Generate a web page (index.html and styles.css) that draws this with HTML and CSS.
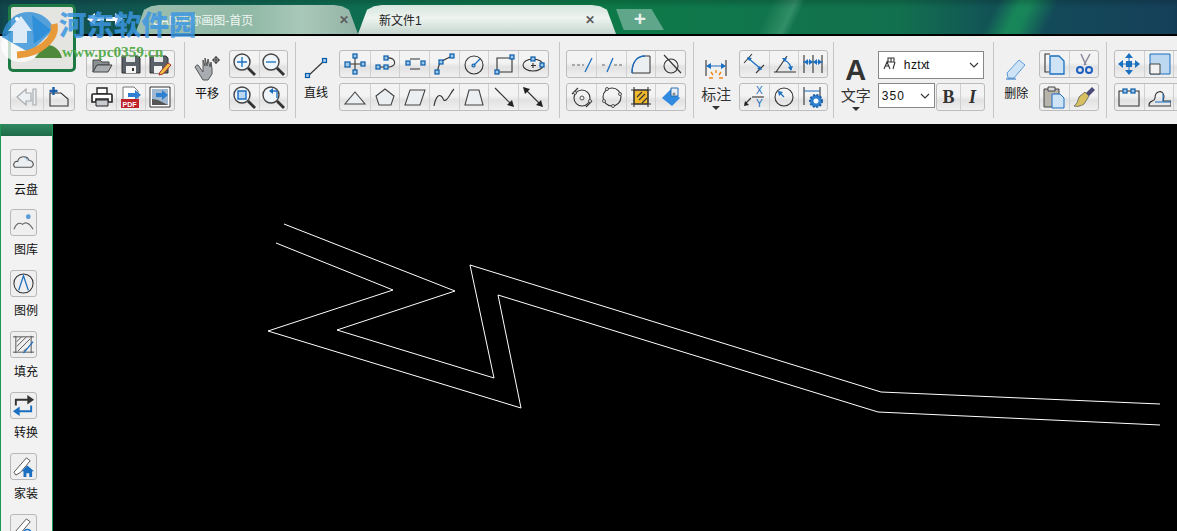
FILE: index.html
```html
<!DOCTYPE html>
<html lang="zh-CN">
<head>
    <meta charset="UTF-8">
    <title>CAD迷你画图</title>
    <link rel="stylesheet" href="styles.css">
</head>
<body>
    <!-- 标签栏 -->
    <header class="titlebar">
        <div class="nav-arrows">
            <svg width="40" height="18" viewBox="0 0 40 18"><path class="w" d="M2 9l8-6v4h9v4h-9v4z"/><path class="w" d="M38 9l-8-6v4h-9v4h9v4z"/></svg>
        </div>
        <div class="tab tab-home"><span>CAD迷你画图-首页</span><b class="close">✕</b></div>
        <div class="tab tab-active"><span>新文件1</span><b class="close">✕</b></div>
        <div class="tab-add">+</div>
    </header>

    <a class="logo">
        <svg width="62" height="62" viewBox="0 0 62 62"><path d="M24 51c2-10 8-13 13-13s12 4 14 13z" fill="#4f8a3c"/></svg>
    </a>

    <div class="watermark">
        <svg class="wm-mark" width="62" height="60" viewBox="0 0 62 60">
            <ellipse cx="21" cy="41" rx="20" ry="16" fill="#fff" opacity=".75"/>
            <path d="M2 32a27 27 0 0 1 52-8L30 48z" fill="#2f8fd8" opacity=".8"/>
            <path d="M54 19c3 14-14 30-37 31" fill="none" stroke="#e89a3a" stroke-width="7"/>
            <path d="M13 38V26H8l13-15 11 15h-5v12z" fill="#f4f8fb" opacity=".85"/>
            <path d="M32 10l19 15-17 14z" fill="#2f8fd8"/>
            <circle cx="17" cy="14" r="2" fill="#fff"/>
        </svg>
        <div class="wm-title">河东软件园</div>
        <div class="wm-url">www.pc0359.cn</div>
    </div>

    <!-- 工具栏 -->
    <section class="ribbon">
        <div class="col col-first">
            <div class="group group-back">
                <button class="tb"><svg viewBox="0 0 24 24"><path class="g" d="M2 12l9-8v4h5v8h-5v4zM18 4h3v16h-3z"/></svg></button>
                <button class="tb"><svg viewBox="0 0 24 24"><path class="k" d="M3 8h11l7 6v7H3z"/><path class="bs2" d="M6.500 2v8M2.500 6h8"/></svg></button>
            </div>
        </div>
        <div class="col col-file">
            <div class="group">
                <button class="tb"><svg viewBox="0 0 24 24"><path d="M3 8h7l2 2h7v3H7l-4 7z" fill="#8a8f94" stroke="#444"/><path d="M3 20l4-7h15l-4 7z" fill="#a9adb0" stroke="#444"/></svg></button>
                <button class="tb"><svg viewBox="0 0 24 24"><path d="M3 4h16l2 2v15H3z" fill="#5a6068" stroke="#333"/><path d="M7 4h9v6H7z" fill="#e4e6e8"/><path d="M7 14h10v7H7z" fill="#f2f2f2"/><path d="M13 16h2v3h-2z" fill="#333"/></svg></button>
                <button class="tb"><svg viewBox="0 0 24 24"><path d="M2 4h16l2 2v15H2z" fill="#5a6068" stroke="#333"/><path d="M6 4h9v6H6z" fill="#e4e6e8"/><path d="M6 14h8v7H6z" fill="#f2f2f2"/><path d="M12 20l8-9 3 2-8 9-4 1z" fill="#f0c040" stroke="#a33"/></svg></button>
            </div>
            <div class="group">
                <button class="tb"><svg viewBox="0 0 24 24"><path d="M7 3h10v6H7z" fill="#fff" stroke="#222" stroke-width="1.4"/><path d="M3 9h18a1 1 0 0 1 1 1v7h-4v-3H6v3H2v-7a1 1 0 0 1 1-1z" fill="#fff" stroke="#222" stroke-width="1.6"/><path d="M6 15h12v6H6z" fill="#c8ccd0" stroke="#222"/></svg></button>
                <button class="tb"><svg viewBox="0 0 24 24"><path d="M4 2h11l4 4v10H4z" fill="#fff" stroke="#777"/><path d="M9 8h7V5l6 5-6 5v-3H9z" fill="#2f80d0"/><path d="M2 14h18v9H2z" fill="#c0222a"/><text class="pdf" x="3.5" y="21.5">PDF</text></svg></button>
                <button class="tb"><svg viewBox="0 0 24 24"><path d="M2 2h20v20H2z" fill="#fff" stroke="#333"/><path d="M4 4h16v16H4z" fill="#9fb8d0"/><path d="M4 14l6 1 10 5H4z" fill="#555"/><path d="M8 8h6V5l6 5-6 5v-3H8z" fill="#2f80d0"/></svg></button>
            </div>
        </div>
        <div class="sep sep-9"></div>
        <div class="big big-pan">
            <svg width="26" height="26" viewBox="0 0 26 26"><path d="M4 10l5 7V5l2 6V3l2 8 1-7 2 8 1-5 1 7v5l-4 6H9L1 12c1-2 2-2 3-2z" fill="#a9acb0" stroke="#555" stroke-linejoin="round"/><circle cx="22" cy="5" r="2.500" fill="none" stroke="#333"/><path class="k" d="M22 1v8M18 5h8"/></svg>
            <span>平移</span>
        </div>
        <div class="col col-zoom">
            <div class="group">
                <button class="tb"><svg viewBox="0 0 24 24"><circle class="lens" cx="10" cy="10" r="8"/><path class="bl" d="M10 5v10M5 10h10"/><path class="hd" d="M16 16l7 7"/></svg></button>
                <button class="tb"><svg viewBox="0 0 24 24"><circle class="lens" cx="10" cy="10" r="8"/><path class="bl" d="M5 10h10"/><path class="hd" d="M16 16l7 7"/></svg></button>
            </div>
            <div class="group">
                <button class="tb"><svg viewBox="0 0 24 24"><circle class="lens" cx="10" cy="10" r="8"/><path d="M6 6h8v8H6z" fill="#bcd8f0" stroke="#1b6fc0" stroke-width="1.4"/><path class="hd" d="M16 16l7 7"/></svg></button>
                <button class="tb"><svg viewBox="0 0 24 24"><circle class="lens" cx="10" cy="10" r="8"/><path class="bl" d="M16 13V6H9"/><path d="M12 3v6l-4-3z" fill="#1b6fc0"/><path class="hd" d="M16 16l7 7"/></svg></button>
            </div>
        </div>
        <div class="sep"></div>
        <div class="big big-line">
            <svg width="24" height="22" viewBox="0 0 24 22"><path class="k" d="M4 19L20 4"/><rect class="h" x="1.500" y="16.500" width="4" height="4"/><rect class="h" x="18.500" y="1.500" width="4" height="4"/></svg>
            <span>直线</span>
        </div>
        <div class="col col-shapes">
            <div class="group">
                <button class="tb"><svg viewBox="0 0 24 24"><path class="k" d="M12 3v18M3 12h18"/><rect class="h" x="10" y="2" width="4" height="4"/><rect class="h" x="10" y="18" width="4" height="4"/><rect class="h" x="2" y="10" width="5" height="5"/><rect class="h" x="18" y="10" width="4" height="4"/></svg></button>
                <button class="tb"><svg viewBox="0 0 24 24"><path class="k" d="M6 15h10M13 6c11-1 11 9 3 9"/><rect class="h" x="3" y="13" width="4" height="4"/><rect class="h" x="11" y="13" width="4" height="4"/><rect class="h" x="11" y="4" width="4" height="4"/></svg></button>
                <button class="tb"><svg viewBox="0 0 24 24"><path class="k" d="M7 7h10M7 17h10"/><rect class="h" x="3" y="9" width="4" height="4"/><rect class="h" x="18" y="9" width="4" height="4"/></svg></button>
                <button class="tb"><svg viewBox="0 0 24 24"><path class="k" d="M5 20l3-10 12-6"/><rect class="h" x="3" y="18" width="4" height="4"/><rect class="h" x="7" y="8" width="4" height="4"/><rect class="h" x="18" y="2" width="4" height="4"/></svg></button>
                <button class="tb"><svg viewBox="0 0 24 24"><circle class="k" cx="12" cy="13" r="9"/><path class="bl" d="M12 13l6-6"/><circle class="h" cx="11.500" cy="13.500" r="1.500"/></svg></button>
                <button class="tb"><svg viewBox="0 0 24 24"><path class="k" d="M5 6h15v14H5z"/><rect class="h" x="18" y="3" width="4" height="4"/><rect class="h" x="3" y="18" width="4" height="4"/></svg></button>
                <button class="tb"><svg viewBox="0 0 24 24"><ellipse class="k" cx="12" cy="13" rx="10" ry="6"/><path class="k" d="M12 11v5M10 13.500h5"/><rect class="h" x="10" y="5" width="4" height="4"/><rect class="h" x="19" y="11" width="4" height="4"/></svg></button>
            </div>
            <div class="group">
                <button class="tb"><svg viewBox="0 0 24 24"><path class="sh" d="M12 7L22 19H2z"/></svg></button>
                <button class="tb"><svg viewBox="0 0 24 24"><path class="sh" d="M12 4l9 7-3 9H6l-3-9z"/></svg></button>
                <button class="tb"><svg viewBox="0 0 24 24"><path class="sh" d="M7 5h15l-5 15H2z"/></svg></button>
                <button class="tb"><svg viewBox="0 0 24 24"><path class="k" d="M2 21c1-7 4-12 7-10s2 6 5 4 5-8 8-11"/></svg></button>
                <button class="tb"><svg viewBox="0 0 24 24"><path class="sh" d="M7 5h10l4 15H3z"/></svg></button>
                <button class="tb"><svg viewBox="0 0 24 24"><path class="k" d="M3 3l18 18"/><path d="M22 22l-7-2 5-5z" fill="#222"/></svg></button>
                <button class="tb"><svg viewBox="0 0 24 24"><path class="k" d="M3 3l18 18"/><path d="M22 22l-7-2 5-5zM2 2l7 2-5 5z" fill="#222"/></svg></button>
            </div>
        </div>
        <div class="sep sep-10"></div>
        <div class="col col-edit">
            <div class="group">
                <button class="tb"><svg viewBox="0 0 24 24"><path class="gd" d="M2 13h3M7 13h3M12 13h2"/><path class="bl" d="M15 20l7-14"/></svg></button>
                <button class="tb"><svg viewBox="0 0 24 24"><path class="gd" d="M2 13h3M14 13h3M19 13h3"/><path class="bl" d="M7 20l6-14"/></svg></button>
                <button class="tb"><svg viewBox="0 0 24 24"><path d="M3 21c0-11 5-17 13-17h5v17z" fill="#eceff2" stroke="#333"/><path class="bl" d="M3 21c0-11 5-17 13-17"/></svg></button>
                <button class="tb"><svg viewBox="0 0 24 24"><circle class="k" cx="12" cy="14" r="7"/><path class="k" d="M5 3l17 18"/></svg></button>
            </div>
            <div class="group">
                <button class="tb"><svg viewBox="0 0 24 24"><circle class="k" cx="12" cy="13" r="8"/><path class="k" d="M2 9l6-6M16 22l6-6"/><circle class="dot" cx="12" cy="13" r="2"/><circle class="dot" cx="5" cy="8" r="1.500"/><circle class="dot" cx="20" cy="16" r="1.500"/></svg></button>
                <button class="tb"><svg viewBox="0 0 24 24"><circle class="k" cx="12" cy="12" r="9"/><circle class="dot" cx="7" cy="4" r="1.500"/><circle class="dot" cx="20" cy="9" r="1.500"/><circle class="dot" cx="4" cy="16" r="1.500"/><circle class="dot" cx="13" cy="21" r="1.500"/></svg></button>
                <button class="tb"><svg viewBox="0 0 24 24"><path d="M5 5h14v14H5z" fill="#f0b82c" stroke="#333"/><path class="k" d="M2 5h20M2 19h20M5 2v20M19 2v20M8 12l5-5M10 15l6-6M13 18l5-5"/></svg></button>
                <button class="tb"><svg viewBox="0 0 24 24"><path d="M3 13l9-9 9 9-8 8z" fill="#2f8ae0"/><path d="M12 3h7v8h-7z" fill="#e8eef4" stroke="#2f6fb0"/><circle class="lensd" cx="15" cy="9" r="1.500"/></svg></button>
            </div>
        </div>
        <div class="sep"></div>
        <div class="big big-dim">
            <svg width="24" height="24" viewBox="0 0 24 24"><path class="k" d="M2 2v16M22 2v16"/><path class="bs" d="M3 8h18"/><path d="M2 8l5-3v6zM22 8l-5-3v6z" fill="#1b6fc0"/><path class="o" d="M12 12v3M7 14l2 3M17 14l-2 3M5 20h4M15 20h4"/></svg>
            <span>标注</span>
            <i class="caret"></i>
        </div>
        <div class="col">
            <div class="group">
                <button class="tb"><svg viewBox="0 0 24 24"><path class="k" d="M2 11L10 2M14 21l8-8"/><path class="bl" d="M6 6l13 11"/><path d="M5 5l5 1-3 3zM20 18l-5-1 3-3z" fill="#1b6fc0"/></svg></button>
                <button class="tb"><svg viewBox="0 0 24 24"><path class="k" d="M2 20h22M4 20L15 4"/><path class="bl" d="M12 8c5 2 7 6 7 10"/><path d="M10 6l5 0-2 4zM19 19l-3-4 5-1z" fill="#1b6fc0"/></svg></button>
                <button class="tb"><svg viewBox="0 0 24 24"><path class="k" d="M3 3v18M12 3v18M21 3v18"/><path class="bs" d="M2 10h20"/><path d="M3 10l4-3v6zM12 10l-4-3v6zM12 10l4-3v6zM21 10l-4-3v6z" fill="#1b6fc0"/></svg></button>
            </div>
            <div class="group">
                <button class="tb"><svg viewBox="0 0 24 24"><text class="xy" x="14" y="9">X</text><path class="k" d="M10 12h12"/><text class="xy" x="14" y="22">Y</text><path class="k" d="M9 13l-6 6"/><path d="M2 21l1-5 4 4z" fill="#222"/></svg></button>
                <button class="tb"><svg viewBox="0 0 24 24"><circle class="k" cx="12" cy="12" r="9"/><path class="bl" d="M7 7l5 5"/><path d="M6 6l5 1-4 4z" fill="#1b6fc0"/></svg></button>
                <button class="tb"><svg viewBox="0 0 24 24"><path class="k" d="M3 2v18M19 2v10"/><path class="bs" d="M3 6h16"/><circle cx="15" cy="16" r="6" fill="#2f80d0" stroke="#1b5fa8" stroke-width="2" stroke-dasharray="2 1.500"/><circle cx="15" cy="16" r="2.500" fill="#fff"/></svg></button>
            </div>
        </div>
        <div class="sep sep-5"></div>
        <div class="big big-text">
            <div class="glyph-a">A</div>
            <span>文字</span>
            <i class="caret"></i>
        </div>
        <div class="col col-font">
            <div class="select select-font">
                <svg class="font-ico" width="13" height="13" viewBox="0 0 13 13"><path class="k" d="M1 12l3-7 3 7M2 9h4M5 1h6v4H5zM8 1v4M10 12l2-7"/></svg>
                <span>hzt<span class="tight">x</span>t</span>
                <svg class="chev" width="10" height="6" viewBox="0 0 10 6"><path class="k" d="M1 1l4 4 4-4"/></svg>
            </div>
            <div class="font-row">
                <div class="select select-size">
                    <span>350</span>
                    <svg class="chev" width="10" height="6" viewBox="0 0 10 6"><path class="k" d="M1 1l4 4 4-4"/></svg>
                </div>
                <div class="group">
                    <button class="tb tb-b">B</button>
                    <button class="tb tb-i">I</button>
                </div>
            </div>
        </div>
        <div class="sep sep-8"></div>
        <div class="big big-erase">
            <svg width="24" height="22" viewBox="0 0 24 22"><path d="M3 15L15 2l6 5L10 20H4z" fill="#cfe3f6" stroke="#5b9bd8"/><path class="bs" d="M2 21h10"/></svg>
            <span>删除</span>
        </div>
        <div class="col">
            <div class="group">
                <button class="tb"><svg viewBox="0 0 24 24"><path class="k" d="M8 2H3v18h4"/><path d="M8 4h9l5 5v13H8z" fill="#cfe3f6" stroke="#1b6fc0" stroke-width="1.300"/></svg></button>
                <button class="tb"><svg viewBox="0 0 24 24"><path d="M9 2l5 11M18 2l-6 11" stroke="#889" stroke-width="1.500"/><circle cx="8" cy="18" r="3" fill="none" stroke="#1b5fc0" stroke-width="2"/><circle cx="17" cy="18" r="3" fill="none" stroke="#1b5fc0" stroke-width="2"/></svg></button>
            </div>
            <div class="group">
                <button class="tb"><svg viewBox="0 0 24 24"><path d="M2 4h15v18H2z" fill="#b8b4ac" stroke="#444"/><path d="M6 2h7v4H6z" fill="#ddd" stroke="#444"/><path d="M10 9h8l4 4v10H10z" fill="#cfe3f6" stroke="#1b6fc0"/></svg></button>
                <button class="tb"><svg viewBox="0 0 24 24"><path d="M13 7l4 4-5 8c-3 2-7 3-10 2 3-2 4-5 5-9z" fill="#d8c060" stroke="#776"/><path d="M14 8l6-6 3 3-6 6z" fill="#4a4a78"/></svg></button>
            </div>
        </div>
        <div class="sep sep-last"></div>
        <div class="col col-last">
            <div class="group">
                <button class="tb"><svg viewBox="0 0 24 24"><path d="M9 9h6v6H9z" fill="#1b6fc0"/><path d="M12 1l4 5H8zM12 23l-4-5h8zM1 12l5-4v8zM23 12l-5 4V8z" fill="#1b6fc0"/><path class="bs" d="M12 5v14M5 12h14"/></svg></button>
                <button class="tb"><svg viewBox="0 0 24 24"><path d="M3 2h20v20H3z" fill="#bcd8f0" stroke="#1b6fc0"/><path d="M3 12h10v10H3z" fill="#f2f2f2" stroke="#444"/></svg></button>
                <button class="tb"></button>
            </div>
            <div class="group">
                <button class="tb"><svg viewBox="0 0 24 24"><path class="k" d="M2 6h20v15H2z"/><rect class="h" x="6" y="4" width="4" height="4"/><rect class="h" x="14" y="4" width="4" height="4"/></svg></button>
                <button class="tb"><svg viewBox="0 0 24 24"><path class="k" d="M2 20c0-5 6-3 6-7 0-7 8-9 9-2 0 4-2 4 0 5h7v5H2z"/><path class="bs" d="M8 17h16M16 9v8"/></svg></button>
                <button class="tb"></button>
            </div>
        </div>
    </section>

    <div class="main">
        <aside class="sidebar">
            <div class="sidebar-head"></div>
            <div class="side-list">
                <div class="side-item">
                    <button class="side-btn"><svg viewBox="0 0 24 24"><path d="M3 17c-3-3 0-7 3-6 1-6 10-7 12-1 4 0 6 5 2 7z" fill="#eceff2" stroke="#555" stroke-width="1.100"/><path d="M13 7c2 0 3 1 3 3" fill="none" stroke="#5b9bd8"/></svg></button>
                    <span>云盘</span>
                </div>
                <div class="side-item">
                    <button class="side-btn"><svg viewBox="0 0 24 24"><circle cx="17" cy="6" r="2.500" fill="#5b9bd8"/><path d="M2 19c3-7 6-7 9-5 3-3 7-2 11 5" fill="none" stroke="#666" stroke-width="1.100"/></svg></button>
                    <span>图库</span>
                </div>
                <div class="side-item">
                    <button class="side-btn"><svg viewBox="0 0 24 24"><circle class="k" cx="12" cy="12" r="10"/><path class="bl" d="M7 19l5-15 5 15"/></svg></button>
                    <span>图例</span>
                </div>
                <div class="side-item">
                    <button class="side-btn"><svg viewBox="0 0 24 24"><path d="M4 3v18M20 3v18M1 4h22M1 20h22M5 9l5-5M5 14l10-10M6 19l13-13M12 19l3-3" fill="none" stroke="#555"/><path class="bl" d="M12 21L22 9"/></svg></button>
                    <span>填充</span>
                </div>
                <div class="side-item">
                    <button class="side-btn"><svg viewBox="0 0 24 24"><path d="M4 12V6h13" fill="none" stroke="#333" stroke-width="2"/><path d="M16 1l7 5-7 5z" fill="#333"/><path d="M20 12v6H7" fill="none" stroke="#1b6fc0" stroke-width="2"/><path d="M8 13l-7 5 7 5z" fill="#1b6fc0"/></svg></button>
                    <span>转换</span>
                </div>
                <div class="side-item">
                    <button class="side-btn"><svg viewBox="0 0 24 24"><path d="M2 18L15 3l4 3-10 12-5 3z" fill="#fff" stroke="#555"/><path d="M16 11l7 6h-2v6h-3v-4h-3v4h-3v-6h-2z" fill="#1b6fc0"/></svg></button>
                    <span>家装</span>
                </div>
                <div class="side-item">
                    <button class="side-btn"><svg viewBox="0 0 24 24"><path d="M2 18L15 3l4 3-10 12-5 3z" fill="#fff" stroke="#555"/><circle cx="16" cy="18" r="4" fill="none" stroke="#1b6fc0" stroke-width="1.500"/></svg></button>
                </div>
            </div>
        </aside>
        <main class="canvas">
            <svg width="1124" height="407" viewBox="53 124 1124 407">
                <polyline class="cad" points="284,224 455,291 337,330 494,378 470,265 881,392 1160,404"/>
                <polyline class="cad" points="276,243 393,290 268,331 521,408 498,295 878,412 1160,425"/>
            </svg>
        </main>
    </div>
</body>
</html>
```
FILE: styles.css
```css
* {
    box-sizing: border-box;
}

html, body {
    height: 531px;
    overflow: hidden;
}

body {
    margin: 0;
    font-family: "Liberation Sans", "Noto Sans CJK SC", sans-serif;
    font-size: 12px;
    color: #111;
    background-color: #000;
    display: flex;
    flex-direction: column;
    position: relative;
}

svg .w { fill: #fff; }
svg .k { fill: none; stroke: #333; stroke-width: 1.1; }
svg .g { fill: #eef1f3; stroke: #a8acb0; stroke-width: 1.2; }
svg .bl { fill: none; stroke: #1b6fc0; stroke-width: 1.3; }
svg .bs { fill: none; stroke: #1b6fc0; stroke-width: 1; }
svg .bs2 { fill: none; stroke: #1b5fa8; stroke-width: 2.4; }
svg .gd { fill: none; stroke: #666; stroke-width: 1.2; }
svg .o { fill: none; stroke: #f08a1c; stroke-width: 1.4; }
svg .h { fill: #9cc8ea; stroke: #0a5ca8; stroke-width: 1.2; }
svg .sh { fill: #eceff2; stroke: #444; stroke-width: 1.1; }
svg .lens { fill: #eef5fb; stroke: #444; stroke-width: 1.4; }
svg .lensd { fill: #888; }
svg .hd { fill: none; stroke: #333; stroke-width: 2.8; }
svg .dot { fill: #f0f0f0; stroke: #444; stroke-width: .9; }
svg .pdf { font: bold 7px "Liberation Sans", sans-serif; fill: #fff; }
svg .xy { font: 10px "Liberation Sans", sans-serif; fill: #1b6fc0; }

/* 标签栏 */
.titlebar {
    height: 36px;
    flex-shrink: 0;
    display: flex;
    align-items: flex-end;
    padding-left: 85px;
    border-bottom: 2px solid #000;
    background:
        linear-gradient(115deg, transparent 700px, rgba(150, 220, 180, .25) 722px, transparent 730px, transparent 905px, rgba(30, 190, 90, .5) 925px, rgba(30, 190, 90, .5) 935px, transparent 960px),
        linear-gradient(90deg, #12484f 0, #0f6a52 300px, #0d7a48 600px, #12704e 900px, #124d58 1010px, #16405a 1177px);
    box-shadow: inset 0 4px 4px rgba(0, 0, 0, .15);
}

.nav-arrows {
    width: 50px;
    height: 28px;
    align-self: flex-start;
    padding-top: 10px;
    flex-shrink: 0;
}

.tab {
    height: 29px;
    display: flex;
    align-items: center;
    justify-content: space-between;
    font-size: 12px;
    flex-shrink: 0;
    clip-path: polygon(0 100%, 9px 16%, 16px 4%, 24px 0, calc(100% - 24px) 0, calc(100% - 16px) 4%, calc(100% - 9px) 16%, 100% 100%);
}

.tab-home {
    width: 223px;
    padding: 0 9px 0 17px;
    color: #eef6f2;
    background: linear-gradient(90deg, #9dbfb0, #8fb8a5 50%, #a9c8ba 75%, #93b3a6);
}

.tab-active {
    width: 258px;
    padding: 0 21px 0 21px;
    color: #222;
    background: linear-gradient(#d6e5dd, #eef4f0 45%, #c6d6ce);
}

.close {
    font-size: 12px;
    font-weight: 900;
    color: #5e5e5e;
}

.tab-add {
    width: 48px;
    height: 21px;
    margin-bottom: 4px;
    text-align: center;
    font-size: 21px;
    line-height: 20px;
    font-weight: bold;
    color: #e8f0ec;
    background-color: #5fa68a;
    flex-shrink: 0;
    clip-path: polygon(0 0, 74% 0, 100% 100%, 16% 100%);
}

/* 左上角按钮 */
.logo {
    position: absolute;
    left: 8px;
    top: 4px;
    width: 68px;
    height: 68px;
    border: 3px solid #1e7a45;
    border-radius: 5px;
    background-color: #e4e4e0;
    overflow: hidden;
}

.logo svg {
    display: block;
}

.watermark {
    position: absolute;
    left: 0;
    top: 5px;
    width: 200px;
    height: 58px;
    pointer-events: none;
}

.wm-mark {
    position: absolute;
    left: 0;
    top: 0;
}

.wm-title {
    position: absolute;
    left: 59px;
    top: -1px;
    font-family: "Noto Sans CJK SC", sans-serif;
    font-weight: 900;
    font-size: 27.500px;
    line-height: 38px;
    white-space: nowrap;
    color: rgba(60, 150, 225, .85);
}

.wm-url {
    position: absolute;
    left: 62px;
    top: 38px;
    font-family: "Liberation Serif", serif;
    font-weight: bold;
    font-size: 15.300px;
    line-height: 18px;
    white-space: nowrap;
    color: rgba(80, 170, 70, .95);
}

/* 工具栏 */
.ribbon {
    height: 88px;
    flex-shrink: 0;
    display: flex;
    align-items: flex-start;
    padding: 14px 0 0 10px;
    background-color: #f0f0f0;
    overflow: hidden;
}

.col {
    display: flex;
    flex-direction: column;
    gap: 5px;
    flex-shrink: 0;
}

.col-first {
    width: 65px;
    padding-top: 33px;
}

.col-file {
    margin-left: 11px;
}

.col-font {
    width: 107px;
    gap: 4px;
}

.col-last {
    width: 100px;
}

.sep {
    width: 1px;
    height: 76px;
    margin: -8px 0 0 7px;
    background-color: #c6c6c6;
    flex-shrink: 0;
}

.sep-5 { margin-left: 5px; }
.sep-8 { margin-left: 8px; }
.sep-9 { margin-left: 9px; }
.sep-10 { margin: -8px 6px 0 10px; }
.sep-last { margin-right: 7px; }

.group {
    display: flex;
    height: 28px;
    border: 1px solid #bcbcbc;
    border-radius: 3px;
    background: linear-gradient(#f3f3f3 45%, #e2e2e2 62%, #f0f0f0);
    flex-shrink: 0;
}

.tb {
    width: 29px;
    height: 26px;
    padding: 0;
    border: 0;
    border-left: 1px solid #d0d0d0;
    background: transparent;
    display: flex;
    align-items: center;
    justify-content: center;
    flex-shrink: 0;
}

.tb:first-child {
    border-left: 0;
}

.tb svg {
    width: 24px;
    height: 24px;
    flex-shrink: 0;
}

.group-back .tb {
    width: 31.500px;
}

.col-zoom .tb {
    width: 28.500px;
}

.col-shapes .tb {
    width: 29.700px;
}

.col-edit .tb {
    width: 29.500px;
}

.big {
    width: 44px;
    height: 68px;
    display: flex;
    flex-direction: column;
    align-items: center;
    flex-shrink: 0;
}

.big span {
    font-size: 12px;
    line-height: 14px;
}

.big-pan svg {
    margin: 5px 0 6px 0;
}

.big-line {
    width: 43px;
    padding-right: 3px;
}

.big-line svg {
    margin: 7px 0 7px 0;
}

.big-dim {
    width: 45px;
}

.big-erase {
    width: 45px;
}

.big-dim span,
.big-text span {
    font-size: 15px;
    line-height: 17px;
    color: #333;
}

.big-dim svg {
    margin: 8px 0 4px 0;
}

.big-erase svg {
    margin: 8px 0 7px 0;
}

.glyph-a {
    margin-top: 3px;
    font-size: 29px;
    font-weight: bold;
    line-height: 34px;
    color: #333;
}

.caret {
    width: 0;
    height: 0;
    margin-top: 3px;
    border: 4px solid transparent;
    border-top: 4px solid #333;
    border-bottom: 0;
}

.select {
    display: flex;
    align-items: center;
    background-color: #fff;
    border: 1px solid #888;
    font-size: 12px;
    letter-spacing: .4px;
}

.select-font {
    height: 28px;
    width: 106px;
    margin-top: 1px;
    padding-left: 4px;
    gap: 8px;
}

.font-ico {
    margin-top: -4px;
}

.select .chev {
    margin-left: auto;
    margin-right: 4px;
}

.tight {
    letter-spacing: -1px;
}

.font-row {
    display: flex;
    gap: 1px;
}

.select-size {
    width: 57px;
    height: 25px;
    padding-left: 3px;
    letter-spacing: 1px;
}

.font-row .group .tb {
    width: 23.500px;
    font-family: "Liberation Serif", serif;
    font-size: 18px;
    font-weight: bold;
    color: #333;
}

.tb-i {
    font-style: italic;
}

/* 左侧栏和画布 */
.main {
    flex: 1;
    display: flex;
    min-height: 0;
}

.sidebar {
    width: 53px;
    flex-shrink: 0;
    background-color: #f2f2f2;
    border-left: 1px solid #1c9a55;
    border-right: 1px solid #1c9a55;
    overflow: hidden;
}

.sidebar-head {
    height: 12px;
    background: linear-gradient(#2f8a60, #1e6a48);
}

.side-list {
    display: flex;
    flex-direction: column;
    padding: 13px 0 0 9px;
}

.side-item {
    height: 61px;
    display: flex;
    flex-direction: column;
    align-items: flex-start;
    gap: 6px;
    flex-shrink: 0;
}

.side-item:first-child {
    height: 60px;
}

.side-item span {
    margin-left: 4px;
    font-size: 12px;
    line-height: 16px;
}

.side-btn {
    width: 27px;
    height: 27px;
    padding: 0;
    border: 1px solid #b8b8b8;
    border-radius: 3px;
    background: #efefef;
    display: flex;
    align-items: center;
    justify-content: center;
}

.side-btn svg {
    width: 23px;
    height: 23px;
}

.canvas {
    flex: 1;
    background-color: #000;
    overflow: hidden;
}

.canvas svg {
    display: block;
}

.cad {
    fill: none;
    stroke: #fff;
    stroke-width: 1;
}
```
